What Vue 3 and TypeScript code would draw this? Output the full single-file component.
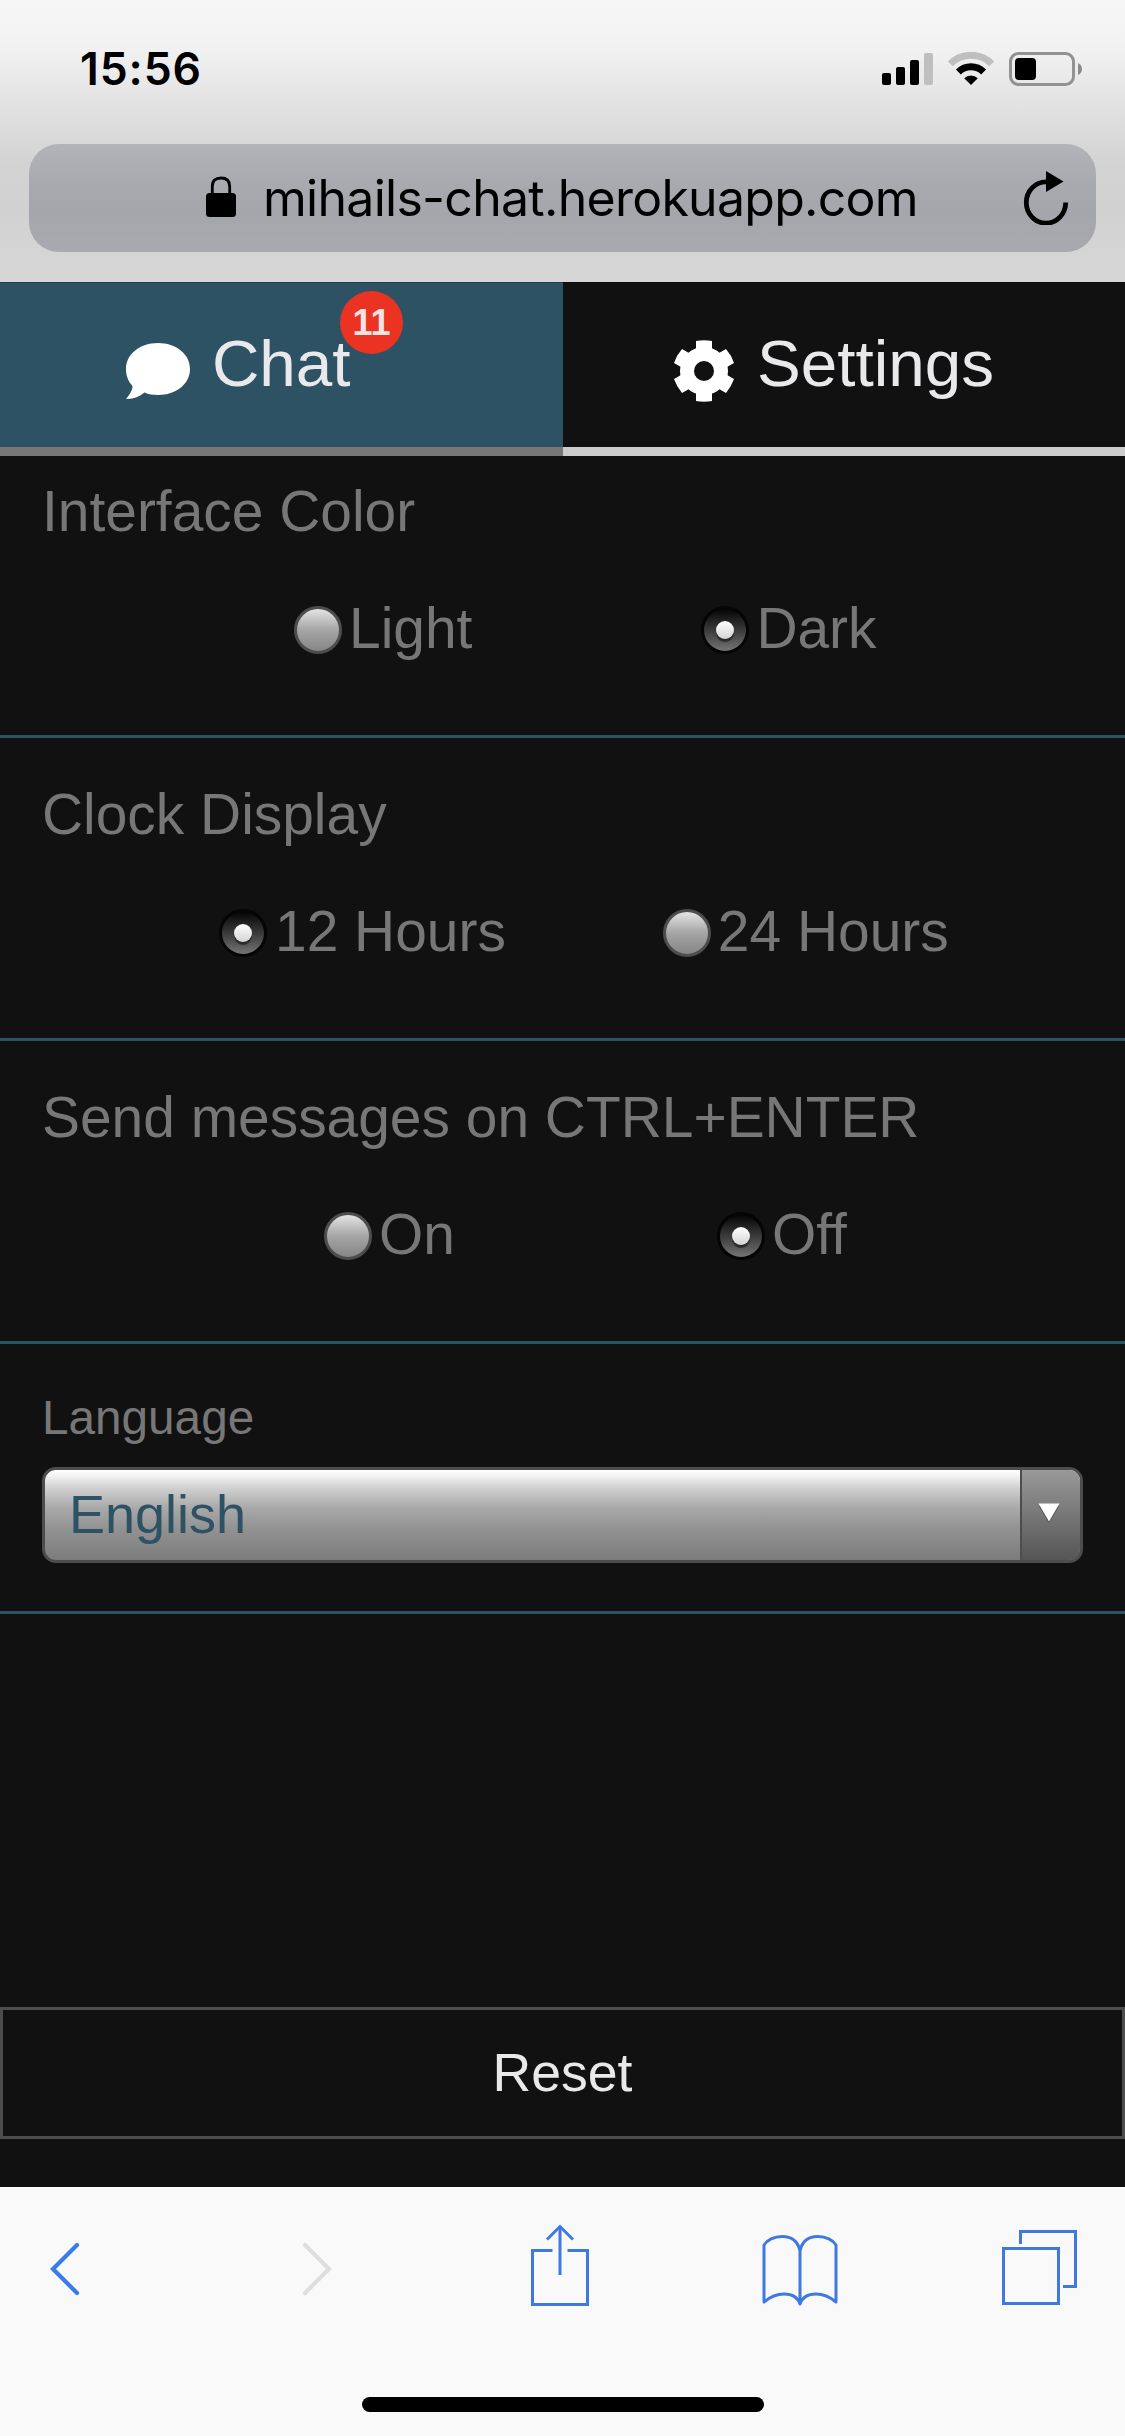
<script setup lang="ts">
import { ref } from 'vue'

interface Setting {
  id: string
  title: string
  options: string[]
  value: string
}

const settings = ref<Setting[]>([
  { id: 'color', title: 'Interface Color', options: ['Light', 'Dark'], value: 'Dark' },
  { id: 'clock', title: 'Clock Display', options: ['12 Hours', '24 Hours'], value: '12 Hours' },
  { id: 'send', title: 'Send messages on CTRL+ENTER', options: ['On', 'Off'], value: 'Off' },
])
const unread = ref(11)
const language = ref('English')
const teeth = [0, 60, 120, 180, 240, 300]
</script>

<template>
  <div class="screen">
    <header class="chrome">
      <div class="status">
        <span class="time">15:56</span>
        <div class="indicators">
          <svg class="signal" width="51" height="34" viewBox="0 0 51 34">
            <rect x="0" y="21" width="9" height="12" rx="2" />
            <rect x="14" y="15" width="9" height="18" rx="2" />
            <rect x="28" y="8" width="9" height="25" rx="2" />
            <rect x="42" y="1" width="9" height="32" rx="2" fill="#bfbfbf" />
          </svg>
          <svg class="wifi" width="46" height="34" viewBox="0 0 46 34" fill="none">
            <path d="M2.3 11.8A29.5 29.5 0 0 1 43.7 11.8" stroke="#bfbfbf" stroke-width="7" />
            <path d="M10.4 20A18 18 0 0 1 35.6 20" stroke="#000" stroke-width="7" />
            <path d="M23 33L16.2 26.2A9.8 9.8 0 0 1 29.8 26.2Z" fill="#000" />
          </svg>
          <svg class="battery" width="74" height="34" viewBox="0 0 74 34">
            <rect x="1.5" y="1.5" width="63" height="31" rx="8" fill="none" stroke="#929292" stroke-width="3" />
            <rect x="6" y="6" width="21" height="22" rx="4" />
            <path d="M69 11Q73 13 73 17T69 23Z" fill="#8a8a8a" />
          </svg>
        </div>
      </div>
      <div class="address">
        <svg class="lock" width="30" height="42" viewBox="0 0 30 42">
          <path d="M6.3 19V10.5Q6.3 2 15 2T23.7 10.5V19" fill="none" stroke="#000" stroke-width="2.8" />
          <rect x="0" y="17" width="30" height="24" rx="3.5" />
        </svg>
        <span class="url">mihails-chat.herokuapp.com</span>
        <svg class="reload" width="46" height="54" viewBox="0 0 46 54">
          <path d="M23 10.8A19.7 20.7 0 1 0 42.7 31.500" fill="none" stroke="#000" stroke-width="4.8" />
          <path d="M23 0L40.5 10.5L23 21Z" />
        </svg>
      </div>
    </header>

    <nav class="tabs">
      <a class="tab chat">
        <svg width="64" height="62" viewBox="0 0 64 62" fill="#fff">
          <path d="M32 3C50 3 64 14 64 29S50 55 32 55C27 55 22.500 54.300 18.500 52.500C13 57 7 59.500 0 59C4 54 6.500 50 6.500 46C2 41 0 35.500 0 29C0 14 14 3 32 3Z" />
        </svg>
        <span class="tab-text">Chat<span class="badge">{{ unread }}</span></span>
      </a>
      <a class="tab gear">
        <svg width="62" height="62" viewBox="-31 -31 62 62">
          <g fill="#fff">
            <path v-for="a in teeth" :key="a" :transform="`rotate(${a})`" d="M-8 -20V-30Q0 -31.600 8 -30V-20Z" />
          </g>
          <circle r="17" fill="none" stroke="#fff" stroke-width="14" />
        </svg>
        <span class="tab-text">Settings</span>
      </a>
    </nav>

    <main class="panel">
      <section v-for="s in settings" :key="s.id" class="setting" :class="s.id">
        <h2>{{ s.title }}</h2>
        <div class="options">
          <label v-for="o in s.options" :key="o" class="option" @click="s.value = o">
            <i class="radio" :class="{ on: s.value === o }"></i><span>{{ o }}</span>
          </label>
        </div>
      </section>
      <section class="setting language">
        <h3>Language</h3>
        <div class="select">
          <span class="value">{{ language }}</span>
          <span class="drop">
            <svg width="22" height="20" viewBox="0 0 22 20">
              <path d="M1 3H21L11 20Z" fill="#505050" />
              <path d="M0.500 0.500H21.500L11 18.500Z" fill="#fff" />
            </svg>
          </span>
        </div>
      </section>
      <button class="reset">Reset</button>
    </main>

    <footer class="toolbar">
      <div class="tools">
        <svg width="30" height="54" viewBox="0 0 30 54" fill="none" stroke="#3a7bea" stroke-width="4.200" stroke-linecap="round">
          <path d="M27 3L3 27L27 51" />
        </svg>
        <svg width="30" height="54" viewBox="0 0 30 54" fill="none" stroke="#dedede" stroke-width="4.200" stroke-linecap="round">
          <path d="M3 3L27 27L3 51" />
        </svg>
        <svg width="58" height="82" viewBox="0 0 58 82" fill="none" stroke="#3f79e0" stroke-width="3">
          <path d="M21.500 26.500H1.500V80.500H56.500V26.500H36.500" />
          <path d="M29 51V3" />
          <path d="M16 15.500L29 2.500L42 15.500" />
        </svg>
        <svg width="76" height="74" viewBox="0 0 76 74" fill="none" stroke="#3f79e0" stroke-width="3" stroke-linejoin="round">
          <path d="M38 71V18C36 8 29 3.500 20 3.500C12 3.500 5 7 2 12V69C8 64 15 61 22 61C31 61 36 65 38 71C40 65 45 61 54 61C61 61 68 64 74 69V12C71 7 64 3.500 56 3.500C47 3.500 40 8 38 18" />
        </svg>
        <svg width="76" height="76" viewBox="0 0 76 76" fill="none" stroke="#3f79e0" stroke-width="3">
          <rect x="1.500" y="18.500" width="55" height="55" />
          <path d="M18.500 14V1.500H73.500V56.500H61" />
        </svg>
      </div>
      <div class="home"></div>
    </footer>
  </div>
</template>

<style>
body {
  margin: 0;
  background: #111;
}
</style>

<style scoped>
.screen {
  width: 1125px;
  height: 2436px;
  display: flex;
  flex-direction: column;
  overflow: hidden;
  background: #111;
  font-family: "Liberation Sans", Arial, sans-serif;
}
.screen * {
  box-sizing: border-box;
}
svg {
  display: block;
  flex: none;
}
.chrome {
  height: 282px;
  flex: none;
  display: flex;
  flex-direction: column;
  font-family: Inter, sans-serif;
  color: #000;
  background: linear-gradient(#f6f6f6 0, #f4f4f4 30px, #f0f0f0 55px, #e6e6e6 90px, #dbdbdb 130px, #d3d3d3 165px, #d1d1d1 210px, #d7d7d7 282px);
}
.status {
  height: 144px;
  padding: 40px 42px 0 80px;
  display: flex;
  justify-content: space-between;
  align-items: flex-start;
}
.time {
  font-size: 44.5px;
  line-height: 58px;
  font-weight: 600;
  letter-spacing: 0.9px;
}
.indicators {
  display: flex;
  padding-top: 12px;
}
.wifi {
  margin-left: 15px;
}
.battery {
  margin-left: 15px;
}
.address {
  height: 108px;
  margin: 0 29px;
  padding: 0 27px 0 177px;
  border-radius: 30px;
  display: flex;
  align-items: center;
  background: linear-gradient(#b3b4b9, #a9aaaf 35%, #a5a6ab 65%, #a9aaaf);
}
.lock {
  margin-top: -3px;
}
.url {
  margin-left: 27px;
  font-size: 50px;
  line-height: 60px;
  letter-spacing: -0.73px;
  white-space: nowrap;
}
.reload {
  margin-left: auto;
}
.tabs {
  height: 174px;
  flex: none;
  display: flex;
}
.tab {
  display: flex;
  align-items: flex-start;
  border-bottom: 9px solid #ccc;
  border-top: 1px solid #0c0c0c;
  padding-top: 57px;
  color: #e9e9ec;
}
.tab.chat {
  width: 563px;
  padding-left: 126px;
  background: #2d5264;
  border-top-color: #1d3e4e;
  border-bottom-color: #777;
}
.tab.gear {
  flex: 1;
  padding-left: 110px;
}
.tab-text {
  position: relative;
  margin-top: -14px;
  margin-left: 22px;
  font-size: 65.6px;
  line-height: 76px;
}
.badge {
  position: absolute;
  left: 128px;
  top: -35px;
  width: 63px;
  height: 63px;
  border-radius: 50%;
  background: #ea3323;
  color: #f3e3e3;
  font-size: 36px;
  font-weight: 700;
  line-height: 64px;
  text-align: center;
}
.panel {
  height: 1731px;
  flex: none;
  display: flex;
  flex-direction: column;
  color: #777;
}
.setting {
  height: 303px;
  flex: none;
  padding-top: 44px;
  border-bottom: 3px solid #2d5264;
}
.setting.color {
  height: 282px;
  padding-top: 23px;
}
h2,
h3 {
  margin: 0;
  padding-left: 42px;
  font-weight: 400;
}
h2 {
  font-size: 56.9px;
  line-height: 64px;
}
h3 {
  font-size: 47.7px;
  line-height: 56px;
}
.options {
  margin-top: 55px;
  height: 64px;
  display: flex;
  align-items: center;
}
.option {
  display: flex;
  align-items: center;
  gap: 7px;
  font-size: 56.9px;
  line-height: 64px;
  white-space: nowrap;
}
.option span {
  margin-top: -4px;
}
.color .options {
  padding-left: 294px;
  gap: 229px;
}
.clock .options {
  padding-left: 219px;
  gap: 158px;
}
.clock .option:first-child span {
  margin-left: 1px;
  margin-right: -1px;
}
.send .options {
  padding-left: 324px;
  gap: 262px;
}
.radio {
  width: 48px;
  height: 48px;
  flex: none;
  border: 3px solid #4d4d4d;
  border-radius: 50%;
  background: linear-gradient(#e4e4e4, #a5a5a5 50%, #868686);
  display: flex;
  align-items: center;
  justify-content: center;
}
.radio.on {
  border-color: #050505;
  background: linear-gradient(#050505, #3a3a3a 50%, #747474);
}
.radio.on::after {
  content: "";
  width: 18px;
  height: 18px;
  border-radius: 50%;
  background: linear-gradient(#fff, #d4d4d4);
  box-shadow: 0 3px 1px #2a2a2a;
}
.setting.language {
  height: 270px;
  padding-top: 46px;
}
.select {
  margin: 21px 42px 0;
  height: 96px;
  border: 3px solid #4d4d4d;
  border-radius: 14px;
  overflow: hidden;
  display: flex;
  background: linear-gradient(#fff, #f4f4f4 6%, #d0d0d0 20%, #a9a9a9 42%, #929292 65%, #7c7c7c);
}
.value {
  flex: 1;
  padding: 14px 0 0 24px;
  color: #2d5264;
  font-size: 54px;
  line-height: 60px;
}
.drop {
  width: 60px;
  padding: 33px 0 0 16px;
  border-left: 2px solid #4d4d4d;
  background: linear-gradient(#999, #555);
}
.reset {
  margin-top: 393px;
  height: 132px;
  flex: none;
  padding: 0 0 2px;
  border: 3px solid #4d4d4d;
  background: #111;
  color: #e9e9e9;
  font-family: inherit;
  font-size: 53.6px;
  line-height: 60px;
}
.toolbar {
  height: 249px;
  flex: none;
  background: #f9f9f9;
  border-top: 1px solid #fff;
}
.tools {
  height: 209px;
  padding: 0 48px 0 50px;
  display: flex;
  align-items: flex-start;
}
.tools svg:nth-child(1) {
  margin-top: 54px;
}
.tools svg:nth-child(2) {
  margin: 54px 0 0 222px;
}
.tools svg:nth-child(3) {
  margin: 36px 0 0 199px;
}
.tools svg:nth-child(4) {
  margin: 45px 0 0 173px;
}
.tools svg:nth-child(5) {
  margin: 42px 0 0 164px;
}
.home {
  width: 402px;
  height: 15px;
  margin: 0 auto;
  border-radius: 8px;
  background: #000;
}
</style>
